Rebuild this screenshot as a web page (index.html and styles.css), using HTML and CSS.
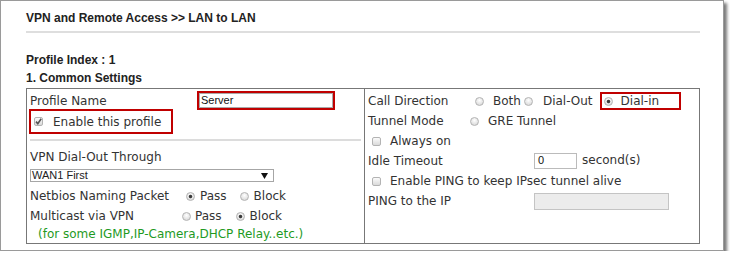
FILE: index.html
```html
<!DOCTYPE html>
<html>
<head>
<meta charset="utf-8">
<title>LAN to LAN</title>
<link rel="stylesheet" href="styles.css">
</head>
<body>
<div class="frame">
  <div class="title">VPN and Remote Access &gt;&gt; LAN to LAN</div>
  <div class="heading idx">Profile Index : 1</div>
  <div class="heading">1. Common Settings</div>
  <div class="settings">
    <div class="col left">
      <div class="row r-name">
        <span class="lbl w-name">Profile Name</span>
        <span class="mark mark-name"><span class="textbox">Server</span></span>
      </div>
      <div class="mark mark-enable">
        <span class="check"><svg width="9" height="9" viewBox="0 0 9 9"><path d="M2 4.6 L3.8 6.6 L7.2 1.8" fill="none" stroke="#555" stroke-width="1.6"/></svg></span>
        <span class="enable-text">Enable this profile</span>
      </div>
      <div class="sep"></div>
      <div class="row r-dial">VPN Dial-Out Through</div>
      <div class="select"><span>WAN1 First</span><svg width="7" height="6" viewBox="0 0 7 6"><path d="M0 0 H7 L3.5 6 Z" fill="#111"/></svg></div>
      <div class="row r-netbios">
        <span class="lbl w-netbios">Netbios Naming Packet</span>
        <span class="radio on"></span><span class="opt ml5">Pass</span>
        <span class="radio ml13"></span><span class="opt ml5">Block</span>
      </div>
      <div class="row">
        <span class="lbl w-multi">Multicast via VPN</span>
        <span class="radio"></span><span class="opt ml4">Pass</span>
        <span class="radio on ml14"></span><span class="opt ml5">Block</span>
      </div>
      <div class="note">(for some IGMP,IP-Camera,DHCP Relay..etc.)</div>
    </div>
    <div class="col right">
      <div class="row">
        <span class="lbl w-call">Call Direction</span>
        <span class="radio"></span><span class="opt ml9">Both</span>
        <span class="radio ml3"></span><span class="opt ml10">Dial-Out</span>
        <span class="mark mark-dial"><span class="radio on"></span><span class="opt ml8">Dial-in</span></span>
      </div>
      <div class="row">
        <span class="lbl w-tunnel">Tunnel Mode</span>
        <span class="radio"></span><span class="opt ml9">GRE Tunnel</span>
      </div>
      <div class="row indent">
        <span class="check"></span><span class="opt ml9">Always on</span>
      </div>
      <div class="row">
        <span class="lbl w-field">Idle Timeout</span>
        <span class="textbox idle">0</span><span class="opt ml5 sec">second(s)</span>
      </div>
      <div class="row indent">
        <span class="check"></span><span class="opt ml9">Enable PING to keep IPsec tunnel alive</span>
      </div>
      <div class="row">
        <span class="lbl w-field">PING to the IP</span>
        <span class="textbox disabled"></span>
      </div>
    </div>
  </div>
</div>
</body>
</html>
```

FILE: styles.css
```css
* { box-sizing: border-box; }

body {
  margin: 0;
  background: #fff;
  font-family: "DejaVu Sans", Verdana, sans-serif;
  font-size: 12px;
  color: #333;
}

.frame {
  width: 724px;
  height: 251px;
  border: 1px solid #9a9a9a;
  box-shadow: 3px 3px 3px #7a7a7a;
  padding: 10px 0 0 25px;
  background: #fff;
}

.title {
  width: 674px;
  font: bold 12px/14px "Liberation Sans", Arial, sans-serif;
  color: #222;
  padding-bottom: 6px;
  border-bottom: 2px solid #dedede;
}

.heading {
  font: bold 12px/18px "Liberation Sans", Arial, sans-serif;
  color: #222;
}

.idx { margin-top: 18px; }

.settings {
  display: flex;
  width: 674px;
  margin-top: 1px;
  border: 1px solid #777;
}

.left {
  width: 338px;
  border-right: 1px solid #777;
  padding: 2px 3px 0 3px;
}

.right {
  flex: 1;
  padding: 2px 3px 0 3px;
}

.row {
  display: flex;
  align-items: center;
  height: 20px;
  white-space: nowrap;
}

.r-name { height: 19px; }

.lbl { flex: none; }
.w-name { width: 167px; }
.w-netbios { width: 156px; }
.w-multi { width: 152px; }
.w-call { width: 107px; }
.w-tunnel { width: 102px; }
.w-field { width: 166px; }

.mark {
  border: 2px solid #c00000;
}

.mark-name {
  display: flex;
  width: 138px;
  height: 19px;
}

.mark-name .textbox {
  width: 134px;
  height: 15px;
}

.textbox {
  display: block;
  border: 1px solid #a9a9a9;
  font: 11px/13px "Liberation Sans", Arial, sans-serif;
  color: #111;
  padding-left: 1px;
  background: #fff;
}

.mark-enable {
  display: flex;
  align-items: center;
  width: 144px;
  height: 25px;
  margin: -1px 0 0 -1px;
  padding-left: 3px;
}

.enable-text { margin-left: 10px; }

.sep {
  height: 2px;
  background: #dcdcdc;
  margin-top: 5px;
}

.r-dial { margin-top: 6px; }

.select {
  display: flex;
  align-items: center;
  justify-content: space-between;
  width: 244px;
  height: 13px;
  margin-top: 2px;
  border: 1px solid #a6a6a6;
  padding: 0 5px 0 1px;
  font: 11px/11px "Liberation Sans", Arial, sans-serif;
  color: #222;
}

.r-netbios { margin-top: 4px; }

.note {
  height: 17px;
  line-height: 16px;
  padding-left: 8px;
  color: #1f9a1f;
  white-space: nowrap;
}

.radio {
  flex: none;
  width: 9px;
  height: 9px;
  border-radius: 50%;
  border: 1px solid #b3b3b3;
  background: radial-gradient(circle at 50% 35%, #ffffff 0, #e6e6e6 55%, #d2d2d2 100%);
}

.radio.on {
  background:
    radial-gradient(circle at 50% 50%, #3a3a3a 0, #3a3a3a 1.3px, rgba(0,0,0,0) 2.2px),
    radial-gradient(circle at 50% 35%, #ffffff 0, #e6e6e6 55%, #d2d2d2 100%);
}

.check {
  flex: none;
  display: block;
  width: 9px;
  height: 9px;
  border: 1px solid #b3b3b3;
  border-radius: 2px;
  background: linear-gradient(#fbfbfb, #dadada);
  position: relative;
}

.check svg {
  position: absolute;
  left: -1px;
  top: -1px;
}

.opt { flex: none; }
.ml3 { margin-left: 3px; }
.ml4 { margin-left: 4px; }
.ml5 { margin-left: 5px; }
.ml8 { margin-left: 8px; }
.ml9 { margin-left: 9px; }
.ml10 { margin-left: 10px; }
.ml13 { margin-left: 13px; }
.ml14 { margin-left: 14px; }

.mark-dial {
  display: flex;
  align-items: center;
  width: 81px;
  height: 18px;
  margin-left: 7px;
  padding-left: 2px;
}

.indent { padding-left: 4px; }

.idle {
  width: 43px;
  height: 16px;
  padding-left: 3px;
  border-color: #bbb;
}

.sec { margin-top: -3px; }

.disabled {
  width: 135px;
  height: 17px;
  background: #ececec;
  border-color: #c4c4c4;
}
```
